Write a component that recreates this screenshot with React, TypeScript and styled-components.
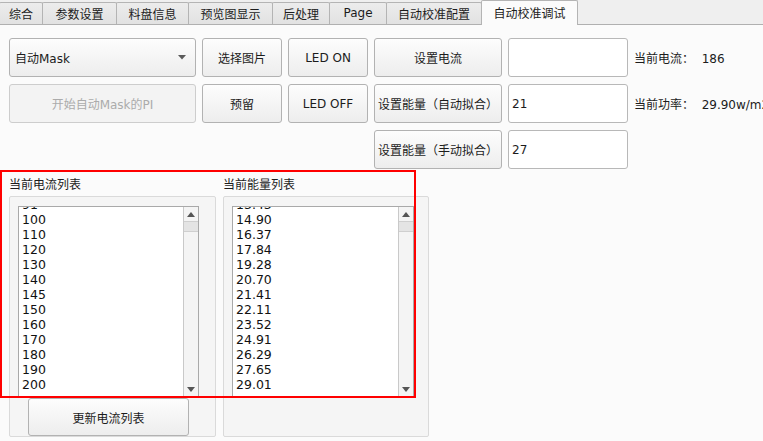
import { useEffect, useRef } from 'react'
import styled, { createGlobalStyle } from 'styled-components'

const Tabs = [
  { id: 1, label: '综合', w: 44 },
  { id: 2, label: '参数设置', w: 75 },
  { id: 3, label: '料盘信息', w: 73 },
  { id: 4, label: '预览图显示', w: 85 },
  { id: 5, label: '后处理', w: 58 },
  { id: 6, label: 'Page', w: 58 },
  { id: 7, label: '自动校准配置', w: 96 },
  { id: 8, label: '自动校准调试', w: 97, active: true },
]

const Currents = ['91', '100', '110', '120', '130', '140', '145', '150', '160', '170', '180', '190', '200']
const Energies = ['13.43', '14.90', '16.37', '17.84', '19.28', '20.70', '21.41', '22.11', '23.52', '24.91', '26.29', '27.65', '29.01']

const ListBox = ({ items }: { items: string[] }) => {
  const ref = useRef<HTMLDivElement>(null)
  useEffect(() => {
    // list is scrolled to the bottom, first row half hidden
    if (ref.current) ref.current.scrollTop = 10
  }, [])
  return (
    <StyledList>
      <StyledListItems ref={ref}>
        {items.map((item) => (
          <StyledListItem key={item}>{item}</StyledListItem>
        ))}
      </StyledListItems>
      <StyledScrollBar>
        <StyledArrow>
          <svg width="8" height="5" viewBox="0 0 8 5">
            <path d="M0 5 L4 0 L8 5 Z" fill="#555" />
          </svg>
        </StyledArrow>
        <StyledThumb />
        <StyledTrack />
        <StyledArrow>
          <svg width="8" height="5" viewBox="0 0 8 5">
            <path d="M0 0 L4 5 L8 0 Z" fill="#555" />
          </svg>
        </StyledArrow>
      </StyledScrollBar>
    </StyledList>
  )
}

const App = () => {
  return (
    <StyledWindow>
      <GlobalStyle />
      <StyledTabBar>
        {Tabs.map((tab) => (
          <StyledTab key={tab.id} $w={tab.w} $active={!!tab.active}>
            {tab.label}
          </StyledTab>
        ))}
      </StyledTabBar>
      <StyledPanel>
        <StyledControls>
          <StyledCombo>
            <span>自动Mask</span>
            <svg width="8" height="5" viewBox="0 0 8 5">
              <path d="M0 0 L8 0 L4 4.5 Z" fill="#5a5a5a" />
            </svg>
          </StyledCombo>
          <StyledButton>选择图片</StyledButton>
          <StyledButton>LED ON</StyledButton>
          <StyledButton>设置电流</StyledButton>
          <StyledInput />
          <StyledLabel>当前电流：&nbsp;&nbsp;186</StyledLabel>

          <StyledButton disabled>开始自动Mask的PI</StyledButton>
          <StyledButton>预留</StyledButton>
          <StyledButton>LED OFF</StyledButton>
          <StyledButton $tight>设置能量（自动拟合）</StyledButton>
          <StyledInput>21</StyledInput>
          <StyledLabel>当前功率：&nbsp;&nbsp;29.90w/m2</StyledLabel>

          <StyledButton $tight $col={4}>设置能量（手动拟合）</StyledButton>
          <StyledInput>27</StyledInput>
        </StyledControls>

        <StyledGroups>
          <StyledGroup $w={207}>
            <StyledGroupTitle>当前电流列表</StyledGroupTitle>
            <StyledFrame>
              <ListBox items={Currents} />
              <StyledUpdateButton>更新电流列表</StyledUpdateButton>
            </StyledFrame>
          </StyledGroup>
          <StyledGroup $w={206}>
            <StyledGroupTitle>当前能量列表</StyledGroupTitle>
            <StyledFrame>
              <ListBox items={Energies} />
            </StyledFrame>
          </StyledGroup>
        </StyledGroups>
      </StyledPanel>
      <StyledHighlight />
    </StyledWindow>
  )
}

export default App

const GlobalStyle = createGlobalStyle`
  html, body {
    margin: 0;
    padding: 0;
    overflow: hidden;
    background: #fbfbfb;
  }
  body {
    font-family: "DejaVu Sans", "Noto Sans CJK SC", sans-serif;
    font-size: 12px;
    color: #1c1c1c;
  }
`

const StyledWindow = styled.div`
  position: relative;
  width: 763px;
  height: 441px;
  overflow: hidden;
  background: #fbfbfb;
`

const StyledTabBar = styled.div`
  display: flex;
  align-items: flex-end;
  height: 25px;
  box-sizing: border-box;
  background: #efefef;
  border-bottom: 1px solid #b0b0b0;
`

const StyledTab = styled.div<{ $w: number; $active: boolean }>`
  width: ${(p) => p.$w}px;
  height: ${(p) => (p.$active ? 25 : 22)}px;
  margin-left: -1px;
  margin-bottom: ${(p) => (p.$active ? -1 : 0)}px;
  box-sizing: border-box;
  display: flex;
  align-items: center;
  justify-content: center;
  padding-bottom: 1px;
  border: 1px solid #b4b4b4;
  border-bottom: none;
  border-radius: 2px 2px 0 0;
  background: ${(p) => (p.$active ? '#fbfbfb' : 'linear-gradient(#ececec, #e2e2e2)')};
  white-space: nowrap;
`

const StyledPanel = styled.div`
  padding: 13px 0 0 9px;
`

const StyledControls = styled.div`
  display: grid;
  grid-template-columns: 187px 80px 80px 128px 120px auto;
  grid-auto-rows: 39px;
  column-gap: 6px;
  row-gap: 7px;
`

const StyledButton = styled.button<{ $tight?: boolean; $col?: number }>`
  grid-column: ${(p) => (p.$col ? `${p.$col}` : 'auto')};
  box-sizing: border-box;
  margin: 0;
  padding: 0 ${(p) => (p.$tight ? 2 : 6)}px;
  font: inherit;
  color: #1c1c1c;
  white-space: nowrap;
  border: 1px solid #b2b2b2;
  border-radius: 3px;
  background: linear-gradient(#fdfdfd, #ededed);
  &:disabled {
    color: #ababab;
    border-color: #cdcdcd;
    background: #f3f3f3;
  }
`

const StyledCombo = styled.div`
  box-sizing: border-box;
  display: flex;
  align-items: center;
  justify-content: space-between;
  padding: 0 9px 0 5px;
  border: 1px solid #b2b2b2;
  border-radius: 3px;
  background: linear-gradient(#fdfdfd, #ededed);
`

const StyledInput = styled.div`
  box-sizing: border-box;
  display: flex;
  align-items: center;
  padding: 0 3px;
  border: 1px solid #b8b8b8;
  border-radius: 3px;
  background: #ffffff;
`

const StyledLabel = styled.div`
  display: flex;
  align-items: center;
  white-space: nowrap;
`

const StyledGroups = styled.div`
  display: flex;
  gap: 7px;
  margin-top: 8px;
`

const StyledGroup = styled.div<{ $w: number }>`
  width: ${(p) => p.$w}px;
  display: flex;
  flex-direction: column;
`

const StyledGroupTitle = styled.div`
  height: 19px;
  line-height: 16px;
`

const StyledFrame = styled.div`
  box-sizing: border-box;
  height: 241px;
  padding: 9px 0 0 8px;
  border: 1px solid #dadada;
  border-radius: 2px;
  background: #f5f5f5;
`

const StyledList = styled.div`
  box-sizing: border-box;
  display: flex;
  width: 181px;
  height: 191px;
  border: 1px solid #a9a9a9;
  background: #ffffff;
  ${StyledGroup}:last-child & {
    width: 182px;
  }
`

const StyledListItems = styled.div`
  flex: 1;
  overflow: hidden;
  padding: 0 0 6px 3px;
`

const StyledListItem = styled.div`
  height: 15px;
  line-height: 15px;
  font-size: 12.5px;
  color: #111;
`

const StyledScrollBar = styled.div`
  width: 14px;
  display: flex;
  flex-direction: column;
  border-left: 1px solid #c9c9c9;
  background: #f4f4f4;
`

const StyledArrow = styled.div`
  height: 14px;
  display: flex;
  align-items: center;
  justify-content: center;
`

const StyledThumb = styled.div`
  height: 11px;
  box-sizing: border-box;
  border-top: 1px solid #cfcfcf;
  border-bottom: 1px solid #cfcfcf;
  background: #e4e4e4;
`

const StyledTrack = styled.div`
  flex: 1;
`

const StyledUpdateButton = styled.button`
  display: block;
  box-sizing: border-box;
  width: 161px;
  height: 38px;
  margin: 1px 0 0 10px;
  padding: 0;
  font: inherit;
  color: #1c1c1c;
  border: 1px solid #b2b2b2;
  border-radius: 3px;
  background: linear-gradient(#fdfdfd, #ededed);
`

const StyledHighlight = styled.div`
  position: absolute;
  left: 0;
  top: 170px;
  width: 416px;
  height: 228px;
  box-sizing: border-box;
  border: 2px solid #ff0000;
  pointer-events: none;
`
